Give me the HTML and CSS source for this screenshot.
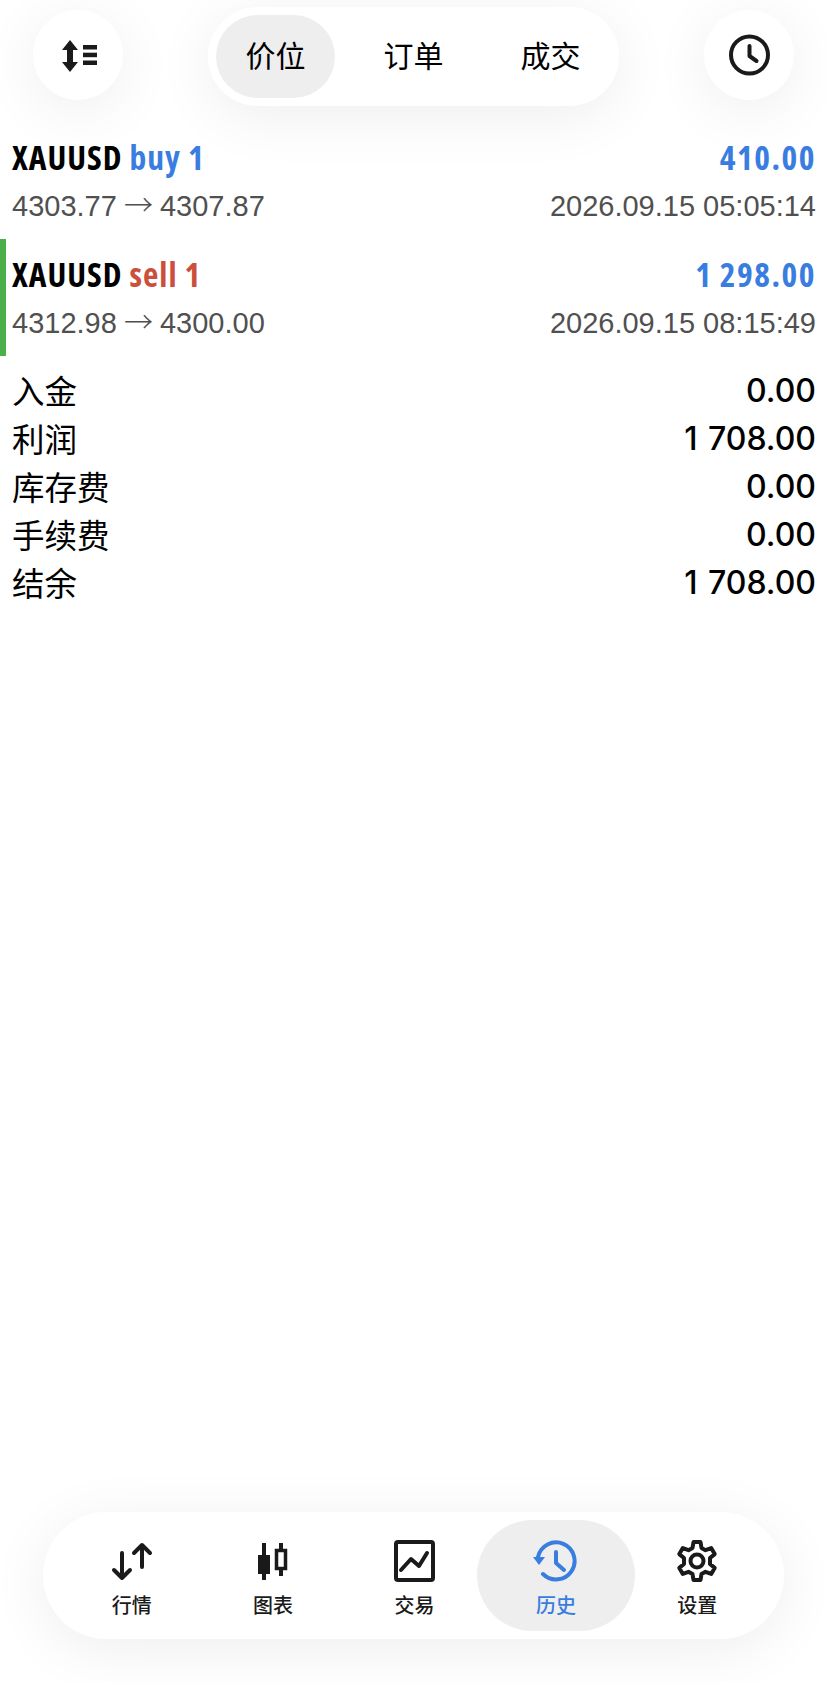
FILE: index.html
```html
<!DOCTYPE html>
<html lang="zh">
  <head>
    <meta charset="UTF-8">
    <meta name="viewport" content="width=device-width, initial-scale=1.0">
    <title>历史</title>
    <link rel="stylesheet" href="styles.css">
  </head>
  <body>
<div class="page">
  <div class="top-bar">
    <div class="round-button">
      <svg width="40" height="40" viewBox="0 0 40 40">
        <path class="solid" d="M12 5l8 10h-5v12h5l-8 10l-8-10h5v-12h-5z"/>
        <rect class="solid" x="25" y="10" width="14" height="4.500"/>
        <rect class="solid" x="25" y="17.700" width="14" height="4.500"/>
        <rect class="solid" x="25" y="25.500" width="14" height="4.500"/>
      </svg>
    </div>
    <div class="tabs">
      <div class="tab tab-active">价位</div>
      <div class="tab">订单</div>
      <div class="tab">成交</div>
    </div>
    <div class="round-button">
      <svg width="44" height="44" viewBox="0 0 44 44">
        <circle class="line" cx="22.500" cy="22" r="18.500" stroke-width="4"/>
        <path class="line" d="M22.500 13v10l7 5" stroke-width="4"/>
      </svg>
    </div>
  </div>

  <div class="deals">
    <div class="deal">
      <div class="deal-line">
        <div class="deal-name">XAUUSD <span class="buy">buy 1</span></div>
        <div class="deal-profit">410.00</div>
      </div>
      <div class="deal-line deal-sub">
        <div>4303.77 <span class="arrow">→</span> 4307.87</div>
        <div>2026.09.15 05:05:14</div>
      </div>
    </div>
    <div class="deal deal-marked">
      <div class="deal-line">
        <div class="deal-name">XAUUSD <span class="sell">sell 1</span></div>
        <div class="deal-profit">1 298.00</div>
      </div>
      <div class="deal-line deal-sub">
        <div>4312.98 <span class="arrow">→</span> 4300.00</div>
        <div>2026.09.15 08:15:49</div>
      </div>
    </div>
  </div>

  <div class="summary">
    <div class="summary-row"><span>入金</span><span class="summary-value">0.00</span></div>
    <div class="summary-row"><span>利润</span><span class="summary-value">1 708.00</span></div>
    <div class="summary-row"><span>库存费</span><span class="summary-value">0.00</span></div>
    <div class="summary-row"><span>手续费</span><span class="summary-value">0.00</span></div>
    <div class="summary-row"><span>结余</span><span class="summary-value">1 708.00</span></div>
  </div>

  <div class="nav">
    <div class="nav-item">
      <svg width="44" height="44" viewBox="0 0 44 44">
        <path class="line" d="M12 14v25M4 31l8 8l8-8" stroke-width="4"/>
        <path class="line" d="M32 28v-22M24 14l8-8l8 8" stroke-width="4"/>
      </svg>
      <span>行情</span>
    </div>
    <div class="nav-item">
      <svg width="44" height="44" viewBox="0 0 44 44">
        <rect class="solid" x="7" y="16" width="12" height="19"/>
        <rect class="solid" x="11" y="4" width="4" height="37"/>
        <rect class="line-flat" x="25.500" y="11.500" width="9" height="18" stroke-width="3.500"/>
        <path class="line-flat" d="M30 4v7M30 30v7" stroke-width="4"/>
      </svg>
      <span>图表</span>
    </div>
    <div class="nav-item">
      <svg width="44" height="44" viewBox="0 0 44 44">
        <rect class="line" x="3" y="3" width="37" height="38" rx="2" stroke-width="4"/>
        <path class="line" d="M8 31l10-11l8 7l8-13" stroke-width="4"/>
      </svg>
      <span>交易</span>
    </div>
    <div class="nav-item nav-active">
      <svg width="46" height="44" viewBox="0 0 46 44">
        <path class="line" d="M5 18A18.500 18.500 0 1 1 10 35" stroke-width="4"/>
        <path class="solid" d="M0 18h12l-6 8z"/>
        <path class="line" d="M23 13v11l8 7" stroke-width="4"/>
      </svg>
      <span>历史</span>
    </div>
    <div class="nav-item">
      <svg width="44" height="44" viewBox="0 0 44 44">
        <path class="line" stroke-width="4" d="M18.500 3h7l1 6l4 2.200l5.700-2.100l3.500 6l-4.700 3.900v6l4.700 3.900l-3.500 6l-5.700-2.100l-4 2.200l-1 6h-7l-1-6l-4-2.200l-5.700 2.100l-3.500-6l4.700-3.900v-6l-4.700-3.900l3.500-6l5.700 2.100l4-2.200z"/>
        <circle class="line" cx="22" cy="22" r="6.500" stroke-width="4"/>
      </svg>
      <span>设置</span>
    </div>
  </div>
</div>
  </body>
</html>
```

FILE: styles.css
```css
body {
  margin: 0;
  background: #ffffff;
  color: #000000;
  font-family: "Liberation Sans", "Noto Sans CJK SC", sans-serif;
}

.page {
  height: 1683px;
  display: flex;
  flex-direction: column;
  overflow: hidden;
}

svg {
  display: block;
}
.solid {
  fill: currentColor;
}
.line {
  fill: none;
  stroke: currentColor;
  stroke-linecap: round;
  stroke-linejoin: round;
}
.line-flat {
  fill: none;
  stroke: currentColor;
}

.top-bar {
  height: 122px;
  padding: 7px 34px 0 33px;
  box-sizing: border-box;
  display: flex;
  justify-content: space-between;
  align-items: flex-start;
  flex: none;
}
.round-button {
  width: 90px;
  height: 90px;
  margin-top: 3px;
  border-radius: 50%;
  background: #ffffff;
  color: #1a1a1a;
  display: flex;
  align-items: center;
  justify-content: center;
  box-shadow: 0 10px 60px rgba(0, 0, 0, 0.07);
}
.tabs {
  width: 411px;
  height: 99px;
  padding: 8px 0;
  box-sizing: border-box;
  border-radius: 50px;
  background: #ffffff;
  display: grid;
  grid-template-columns: repeat(3, 1fr);
  box-shadow: 0 10px 60px rgba(0, 0, 0, 0.07);
}
.tab {
  height: 83px;
  padding-bottom: 6px;
  box-sizing: border-box;
  border-radius: 42px;
  display: flex;
  align-items: center;
  justify-content: center;
  font-family: "Noto Sans CJK SC", sans-serif;
  font-size: 30px;
}
.tab-active {
  margin: 0 10px 0 8px;
  background: #eeeeee;
}

.deal {
  height: 117px;
  padding: 7px 12px 0;
  box-sizing: border-box;
}
.deal-marked {
  border-left: 6px solid #4cb04a;
  padding-left: 6px;
}
.deal-line {
  display: flex;
  justify-content: space-between;
  align-items: baseline;
}
.deal-name,
.deal-profit {
  height: 54px;
  line-height: 56px;
  font-family: "Open Sans", sans-serif;
  font-stretch: 75%;
  font-size: 33.500px;
  font-weight: 700;
  letter-spacing: 1px;
}
.deal-profit {
  letter-spacing: 1.500px;
}
.deal-profit,
.buy {
  color: #3a7de0;
}
.sell {
  color: #cb4f3d;
}
.deal-sub {
  font-size: 29px;
  color: #505050;
  line-height: 40px;
}
.arrow {
  margin: 0 -1px;
  font-family: "Noto Sans CJK SC", sans-serif;
  font-weight: 300;
}

.summary {
  padding: 9px 12px 0;
}
.summary-row {
  height: 48px;
  display: flex;
  justify-content: space-between;
  align-items: center;
  font-family: "Noto Sans CJK SC", sans-serif;
  font-size: 32.500px;
}
.summary-value {
  padding-top: 2px;
  font-family: Inter, sans-serif;
  font-size: 32px;
  font-weight: 500;
  word-spacing: 2px;
}

.nav {
  width: 741px;
  height: 127px;
  margin: auto 0 44px 43px;
  padding: 8px 16px 8px 18px;
  box-sizing: border-box;
  border-radius: 64px;
  background: #ffffff;
  display: flex;
  box-shadow: 0 10px 60px rgba(0, 0, 0, 0.07);
}
.nav-item {
  width: 142px;
  height: 111px;
  display: flex;
  flex-direction: column;
  align-items: center;
  justify-content: flex-start;
  padding-top: 19px;
  box-sizing: border-box;
  color: #1a1a1a;
  font-family: "Noto Sans CJK SC", sans-serif;
  font-size: 20px;
  font-weight: 500;
  line-height: 28px;
}
.nav-item span {
  margin-top: 8px;
}
.nav-active {
  width: 158px;
  margin: 0 -8px;
  border-radius: 56px;
  background: #eeeeee;
  color: #3a7de0;
}
```
